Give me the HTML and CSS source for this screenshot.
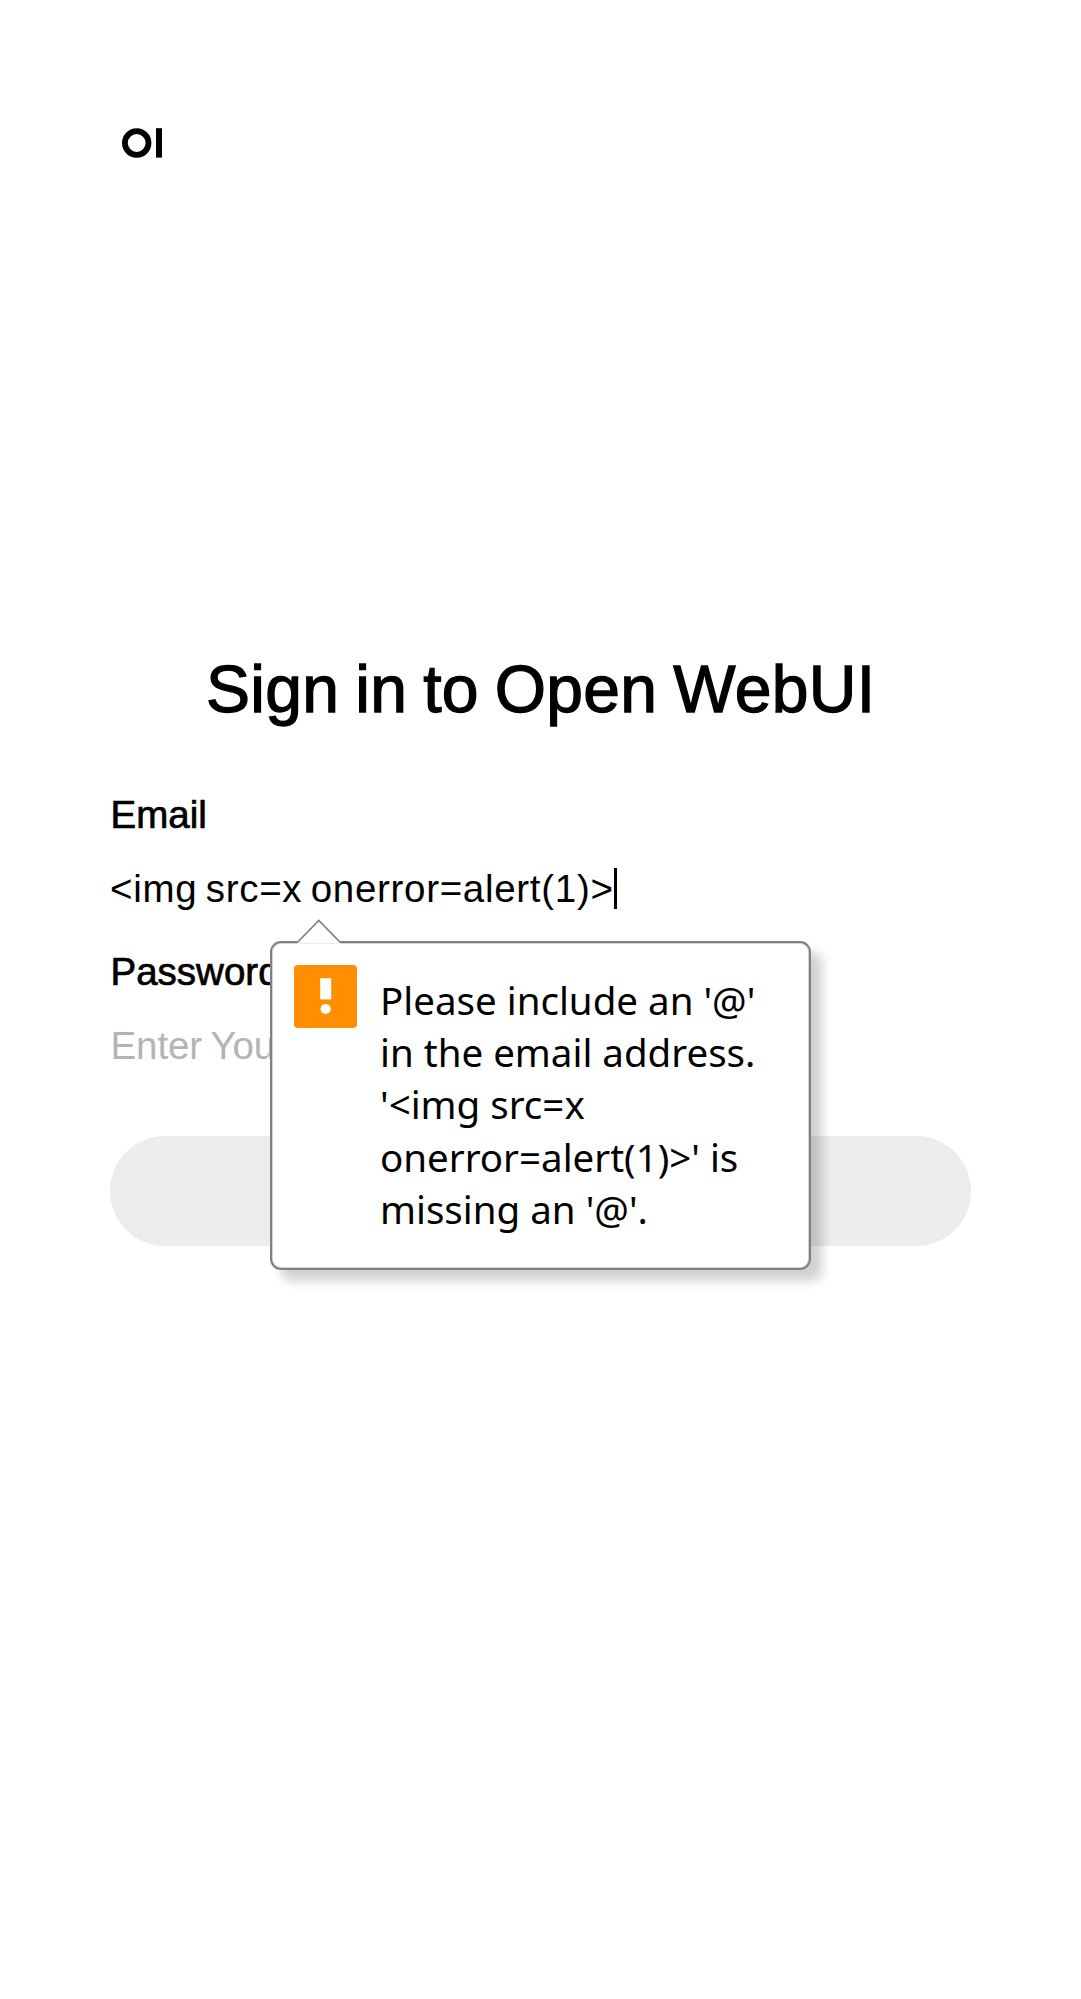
FILE: index.html
```html
<!DOCTYPE html>
<html lang="en">
<head>
<meta charset="utf-8">
<title>Open WebUI</title>
<link rel="stylesheet" href="styles.css">
</head>
<body>
<header class="brand">
  <svg class="logo" viewBox="0 0 41 30" aria-label="Open WebUI">
    <circle cx="14.7" cy="15" r="11.8" fill="none" stroke="#000" stroke-width="5.8"/>
    <rect x="34" y="0.2" width="6" height="29.4"/>
  </svg>
</header>
<main class="signin">
  <h1 class="title">Sign in to Open WebUI</h1>
  <div class="field">
    <div class="label">Email</div>
    <div class="input"><span class="value">&lt;img src=x onerror=alert(1)&gt;</span><span class="caret"></span></div>
  </div>
  <div class="field">
    <div class="label">Password</div>
    <div class="input placeholder">Enter You</div>
  </div>
  <div class="submit"></div>
  <div class="popup">
    <svg class="arrow" viewBox="0 0 46 26">
      <path d="M1.3 23.5 22.8 2 44.3 23.5V26H1.3Z" fill="#fff"/>
      <path d="M1.3 23.5 22.8 1.5 44.3 23.5" fill="none" stroke="#808080" stroke-width="1.7"/>
      <path d="M2.5 24.4H43" stroke="#e4e4e4" stroke-width="0.8"/>
    </svg>
    <svg class="warn" viewBox="0 0 63 63">
      <rect width="63" height="63" rx="4" fill="#ff8f00"/>
      <rect x="26.2" y="13.2" width="11" height="21.2" fill="#fff"/>
      <circle cx="31.6" cy="44" r="5.1" fill="#fff"/>
    </svg>
    <p class="message">Please include an '@'<br>in the email address.<br>'&lt;img src=x<br>onerror=alert(1)&gt;' is<br>missing an '@'.</p>
  </div>
</main>
</body>
</html>
```
FILE: styles.css
```css
* { box-sizing: border-box; }
body {
  margin: 0;
  min-height: 1999px;
  background: #fff;
  color: #000;
  font-family: "Liberation Sans", Arial, sans-serif;
  font-size: 38.5px;
}
.brand { height: 645px; padding: 128px 0 0 122px; }
.logo { display: block; width: 41px; height: 30px; }
.signin { position: relative; padding: 0 110px; }
.title {
  margin: 0 0 54px;
  padding-left: 96px;
  font-size: 66px;
  line-height: 88px;
  font-weight: 400;
  letter-spacing: 0.3px;
  word-spacing: -2.7px;
  white-space: nowrap;
  -webkit-text-stroke: 1.3px #000;
}
.field { height: 157px; white-space: nowrap; line-height: 55px; }
.label { margin-bottom: 19px; padding-left: 0.5px; -webkit-text-stroke: 0.7px #000; }
.input { display: flex; align-items: center; height: 55px; }
.value { letter-spacing: 0.7px; word-spacing: -3px; }
.placeholder { color: #b4b4b4; letter-spacing: -0.1px; word-spacing: -1.5px; padding-left: 0.5px; }
.caret { width: 3px; height: 41px; background: #000; }
.submit { height: 110px; margin-top: 35px; border-radius: 55px; background: #ececec; }
.popup {
  position: absolute;
  left: 270px;
  top: 296px;
  display: flex;
  gap: 23px;
  width: 541px;
  height: 329px;
  padding: 22px;
  border: 2px solid #808080;
  border-radius: 11px;
  background: #fff;
  box-shadow: inset 0 0 0 1px #d4d4d4, 11px 11px 11px rgba(0, 0, 0, 0.19);
}
.arrow { position: absolute; left: 24.2px; top: -24px; width: 46px; height: 26px; }
.warn { flex: none; width: 63px; height: 63px; }
.message {
  margin: 8.5px 0 0;
  font: 38.5px/52.4px "Noto Sans", sans-serif;
  white-space: nowrap;
}
```
